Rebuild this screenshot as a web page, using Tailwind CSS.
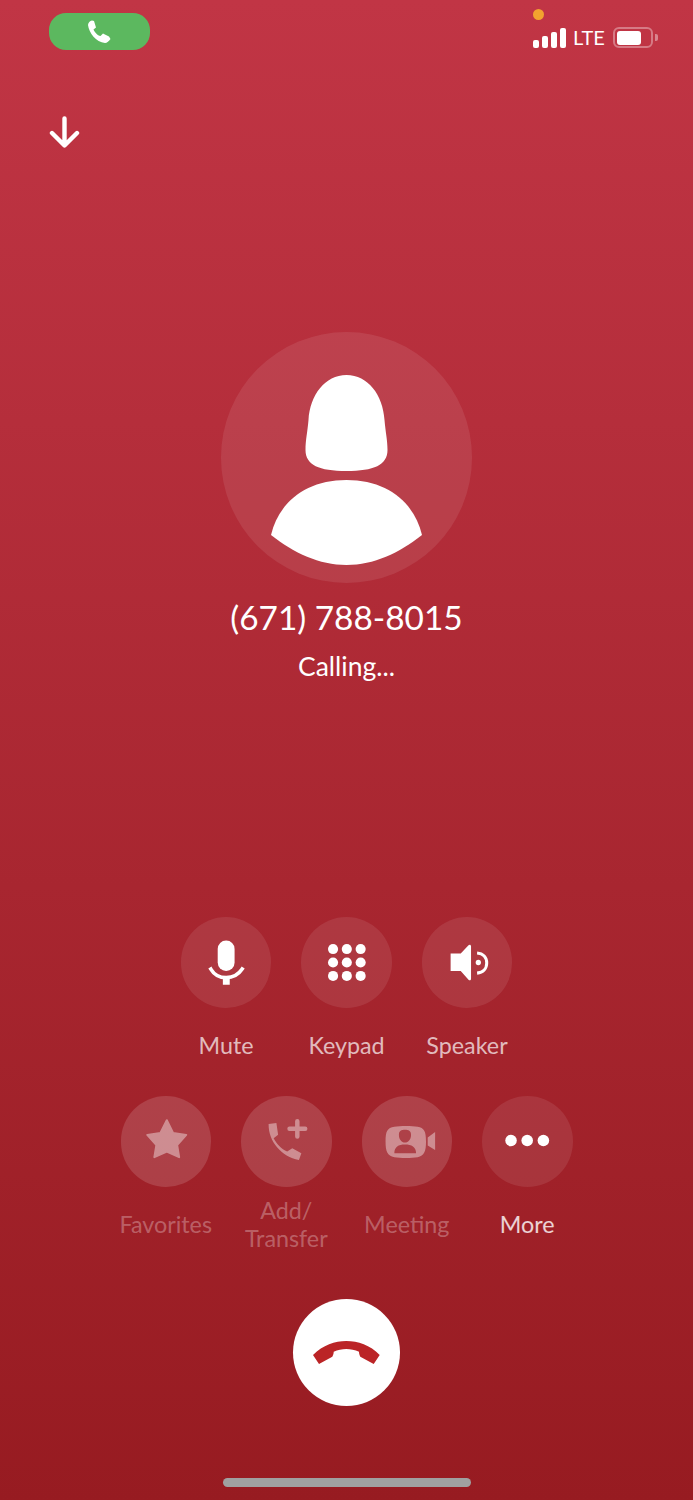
<!DOCTYPE html>
<html lang="en">
<head>
    <meta charset="UTF-8">
    <meta name="viewport" content="width=device-width, initial-scale=1.0">
    <title>Calling</title>
    <script src="https://cdn.jsdelivr.net/npm/@tailwindcss/browser@4"></script>
</head>
<body class="m-0">
    <div class="w-[693px] h-[1500px] flex flex-col overflow-hidden bg-linear-to-b from-[#c13545] to-[#971b21] text-white font-['Lato',sans-serif]">

        <!-- status bar -->
        <div class="flex justify-between items-start pt-[9px] pl-[49px] pr-[35px]">
            <div class="mt-[4px] w-[101px] h-[37px] rounded-[17px] bg-[#5cb85f] flex items-center justify-center">
                <svg width="25" height="24" viewBox="0 0 25 24" fill="white"><path d="M1 5C1 3 3 .8 5 .5L7 1 9 7.5 6.5 9.5C7.5 12 10.5 15.5 13.5 16L16 13.5 22 16.5 23.5 19C22 21 20 23 18 23 9 22 2 13 1 5Z"/></svg>
            </div>
            <div class="flex flex-col items-start">
                <div class="w-[11px] h-[11px] rounded-full bg-[#f2a32f]"></div>
                <div class="flex items-center mt-[7px] h-[21px]">
                    <div class="flex items-end gap-[3px] h-[20px]">
                        <div class="w-[6px] h-[8px] rounded-[2px] bg-white"></div>
                        <div class="w-[6px] h-[12px] rounded-[2px] bg-white"></div>
                        <div class="w-[6px] h-[16px] rounded-[2px] bg-white"></div>
                        <div class="w-[6px] h-[20px] rounded-[2px] bg-white"></div>
                    </div>
                    <span class="ml-[7px] text-[20px] leading-[21px] w-[31px]">LTE</span>
                    <div class="ml-[9px] w-[40px] h-[21px] rounded-[6px] border-2 border-white/35 p-[1.5px]">
                        <div class="w-[24px] h-full rounded-[3px] bg-white"></div>
                    </div>
                    <div class="ml-[2px] w-[3px] h-[7px] rounded-r-[2px] bg-white/40"></div>
                </div>
            </div>
        </div>

        <!-- minimize arrow -->
        <div class="mt-[66px] ml-[49px]">
            <svg class="block" width="31" height="32" viewBox="0 0 31 32" fill="none" stroke="white" stroke-width="4.4" stroke-linecap="round" stroke-linejoin="round"><path d="M15.5 2.5V29M3 17 15.5 29.5 28 17"/></svg>
        </div>

        <!-- contact -->
        <div class="flex flex-col items-center">
            <div class="mt-[184px] w-[251px] h-[251px] rounded-full bg-white/[0.09]">
                <svg class="block" width="251" height="251" viewBox="0 0 251 251" fill="white">
                    <path d="M125.5 43C104 43 89 63 87.5 88 86.5 100 84.5 108 84.5 118 84.5 133 98 139 125.5 139 153 139 166.5 133 166.5 118 166.5 108 164.5 100 163.5 88 162 63 147 43 125.5 43Z"/>
                    <path d="M50 203C58 170 85 148 125.5 148 166 148 193 170 201 203 178 221 153 233 125.5 233 98 233 73 221 50 203Z"/>
                </svg>
            </div>
            <div class="mt-[14px] text-[33.4px] leading-[40px]">(671) 788-8015</div>
            <div class="mt-[13px] text-[26.5px] leading-[32px]">Calling...</div>
        </div>

        <!-- first row -->
        <div class="mt-[235px] flex justify-center gap-[30px]">
            <div class="w-[90.5px] flex flex-col items-center">
                <div class="w-[90.5px] h-[91px] rounded-full bg-white/[0.09]">
                    <svg class="block" width="91" height="91" viewBox="0 0 90 90" fill="white">
                        <rect x="36.3" y="23.3" width="16.7" height="30" rx="8.3"/>
                        <path d="M29.5 51.5C33 57.5 38.5 60 44.7 60S56.5 57.5 60.5 51.5" fill="none" stroke="white" stroke-width="3.6" stroke-linecap="square"/>
                        <rect x="41.4" y="59" width="6.8" height="8"/>
                    </svg>
                </div>
                <div class="mt-[9px] h-[56px] flex items-center text-center whitespace-nowrap text-[23.3px] leading-[28px] text-white/70">Mute</div>
            </div>
            <div class="w-[90.5px] flex flex-col items-center">
                <div class="w-[90.5px] h-[91px] rounded-full bg-white/[0.09]">
                    <svg class="block" width="91" height="91" viewBox="0 0 90 90" fill="white">
                        <circle cx="31.7" cy="31.7" r="5"/><circle cx="45.3" cy="31.7" r="5"/><circle cx="59" cy="31.7" r="5"/>
                        <circle cx="31.7" cy="45" r="5"/><circle cx="45.3" cy="45" r="5"/><circle cx="59" cy="45" r="5"/>
                        <circle cx="31.7" cy="58.3" r="5"/><circle cx="45.3" cy="58.3" r="5"/><circle cx="59" cy="58.3" r="5"/>
                    </svg>
                </div>
                <div class="mt-[9px] h-[56px] flex items-center text-center whitespace-nowrap text-[23.3px] leading-[28px] text-white/70">Keypad</div>
            </div>
            <div class="w-[90.5px] flex flex-col items-center">
                <div class="w-[90.5px] h-[91px] rounded-full bg-white/[0.09]">
                    <svg class="block" width="91" height="91" viewBox="0 0 90 90" fill="white">
                        <path d="M28.3 36H38.3L46 28C47 27 48.5 27.5 48.5 29V61C48.5 62.5 47 63 46 62L38.3 53.5H28.3Z"/>
                        <circle cx="55.7" cy="45" r="2.6"/>
                        <path d="M54.5 35.5C60.5 36 64 40 64 45.5S60.5 55 54.5 55.5" fill="none" stroke="white" stroke-width="3"/>
                    </svg>
                </div>
                <div class="mt-[9px] h-[56px] flex items-center text-center whitespace-nowrap text-[23.3px] leading-[28px] text-white/70">Speaker</div>
            </div>
        </div>

        <!-- second row -->
        <div class="mt-[23px] flex justify-center gap-[30px]">
            <div class="w-[90.5px] flex flex-col items-center">
                <div class="w-[90.5px] h-[91px] rounded-full bg-white/[0.14]">
                    <svg class="block opacity-40" width="91" height="91" viewBox="0 0 90 90" fill="white">
                        <path d="M45.3 24 51.5 36.5 64.5 38.5 55.5 48.5 57.5 60.5 45.3 55 33 60.5 35 48.5 26 38.5 39 36.5Z" stroke="white" stroke-width="2" stroke-linejoin="round"/>
                    </svg>
                </div>
                <div class="mt-[9px] h-[56px] flex items-center text-center whitespace-nowrap text-[23.3px] leading-[28px] text-white/30">Favorites</div>
            </div>
            <div class="w-[90.5px] flex flex-col items-center">
                <div class="w-[90.5px] h-[91px] rounded-full bg-white/[0.14]">
                    <svg class="block opacity-40" width="91" height="91" viewBox="0 0 90 90" fill="white">
                        <path d="M27.3 27.7 35 26.7 36.7 38.3 32.3 41.7C35 47 40 52.5 45.7 55L50.7 51.7 59.7 56.7 57.3 63.3C40 60 27 45 27.3 27.7Z"/>
                        <path d="M55.7 25V40M48 32.3H63.5" fill="none" stroke="white" stroke-width="4.4" stroke-linecap="round"/>
                    </svg>
                </div>
                <div class="mt-[9px] h-[56px] flex items-center text-center whitespace-nowrap text-[23.3px] leading-[28px] text-white/30">Add/<br>Transfer</div>
            </div>
            <div class="w-[90.5px] flex flex-col items-center">
                <div class="w-[90.5px] h-[91px] rounded-full bg-white/[0.14]">
                    <svg class="block opacity-40" width="91" height="91" viewBox="0 0 90 90" fill="white">
                        <path fill-rule="evenodd" d="M23.3 45C23.3 35 25 31.5 32 30.5 38 29.5 49 29.5 55 30.5 61.5 31.5 63.3 35 63.3 45S61.5 59 55 60.5C49 61.5 38 61.5 32 60.5 25 59 23.3 55 23.3 45ZM36.5 38.5C36.5 42.5 39 46 42.5 46S48.5 42.5 48.5 38.5 46 33.5 42.5 33.5 36.5 34.5 36.5 38.5ZM32 56.5H53.5C53.5 50.5 49 48 42.5 48S32 50.5 32 56.5Z"/>
                        <path d="M65 41 72.3 35.7V53.5L65 49Z"/>
                    </svg>
                </div>
                <div class="mt-[9px] h-[56px] flex items-center text-center whitespace-nowrap text-[23.3px] leading-[28px] text-white/30">Meeting</div>
            </div>
            <div class="w-[90.5px] flex flex-col items-center">
                <div class="w-[90.5px] h-[91px] rounded-full bg-white/[0.09]">
                    <svg class="block" width="91" height="91" viewBox="0 0 90 90" fill="white">
                        <circle cx="28.7" cy="44" r="5.7"/><circle cx="44.7" cy="44" r="5.7"/><circle cx="60.7" cy="44" r="5.7"/>
                    </svg>
                </div>
                <div class="mt-[9px] h-[56px] flex items-center text-center whitespace-nowrap text-[23.3px] leading-[28px] text-white/80">More</div>
            </div>
        </div>

        <!-- end call -->
        <div class="mt-[47px] flex justify-center">
            <div class="w-[107px] h-[107px] rounded-full bg-white flex items-center justify-center">
                <svg class="block" width="67" height="24" viewBox="0 0 67 24" fill="#bb2426"><path d="M0 14C10 4 22 0 33.3 0 45 0 57 4 66.7 14L60.7 23 47.3 15.7C46.5 14 46 12.5 46 10.7 42 8.8 37.5 8 33.3 8 29 8 24.7 8.8 20.7 10.7 20.7 12.5 20.2 14 19.3 15.7L6 23Z"/></svg>
            </div>
        </div>

        <!-- home indicator -->
        <div class="mt-[72px] flex justify-center">
            <div class="w-[248px] h-[9px] rounded-full bg-[#a0a0a0]"></div>
        </div>
    </div>
</body>
</html>
